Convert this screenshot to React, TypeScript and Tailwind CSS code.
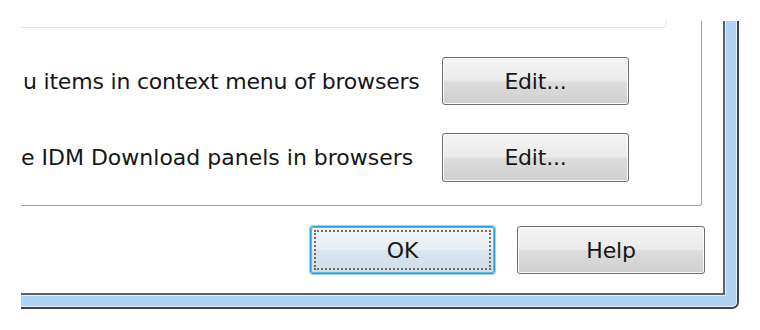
import React from "react";

const ui = "font-['DejaVu_Sans',sans-serif] text-[22px] tracking-[-0.2px] text-[#161616]";

const winButton =
  "flex items-center justify-center rounded-[3px] border border-[#707070] bg-[linear-gradient(to_bottom,#f4f4f4_0%,#ebebeb_48%,#dddddd_52%,#cfcfcf_100%)] shadow-[inset_0_0_0_1px_#fbfbfb]";

const okButton =
  "relative flex items-center justify-center rounded-[3px] border border-[#2a9cd6] bg-[linear-gradient(to_bottom,#f1f5f8_0%,#e8eef3_48%,#d8e5ef_52%,#cddde9_100%)] shadow-[0_0_0_1px_#9fd5f2,inset_0_0_0_1px_#5fb8e6]";

const App: React.FC = () => {
  return (
    <div className="w-[760px] h-[330px] bg-white overflow-hidden pt-[21px] pl-[21px]">
      {/* window frame, cropped on left and top */}
      <div className="w-[718px] h-[288px] flex border-r-2 border-b-2 border-[#3e434a] rounded-br-[7px]">
        <div className="flex-1 flex border-r border-b border-[#e2eefa] rounded-br-[5px]">
          <div className="flex-1 flex border-r-[10px] border-b-[10px] border-[#b3d3f5] rounded-br-[4px]">
            <div className="flex-1 flex border-r border-b border-[#e4eef8]">
              <div className="flex-1 flex flex-col border-r-2 border-b-2 border-[#5a5f66] bg-white">
                {/* tab page */}
                <div className="w-[681px] h-[185px] flex flex-col border-r border-b border-[#a3a3a3] rounded-br-[3px]">
                  <div className="w-[646px] h-[7px] border-r border-b border-[#dfe4ea] rounded-br-[5px]" />

                  <div className="flex items-center h-[48px] mt-[29px]">
                    <div className={`w-[421px] whitespace-nowrap pl-[2px] ${ui}`}>
                      u items in context menu of browsers
                    </div>
                    <button className={`w-[187px] h-[48px] ${winButton} ${ui}`}>Edit...</button>
                  </div>

                  <div className="flex items-center h-[49px] mt-[28px]">
                    <div className={`w-[421px] whitespace-nowrap tracking-[0px] ${ui}`}>
                      e IDM Download panels in browsers
                    </div>
                    <button className={`w-[187px] h-[49px] ${winButton} ${ui}`}>Edit...</button>
                  </div>
                </div>

                {/* dialog buttons */}
                <div className="flex justify-end gap-[22px] pr-[18px] mt-[20px]">
                  <button className={`w-[185px] h-[48px] ${okButton} ${ui}`}>
                    <span className="absolute inset-[3px] border-2 border-dotted border-[#7d6755]" />
                    OK
                  </button>
                  <button className={`w-[188px] h-[48px] ${winButton} ${ui}`}>Help</button>
                </div>
              </div>
            </div>
          </div>
        </div>
      </div>
    </div>
  );
};

export default App;
